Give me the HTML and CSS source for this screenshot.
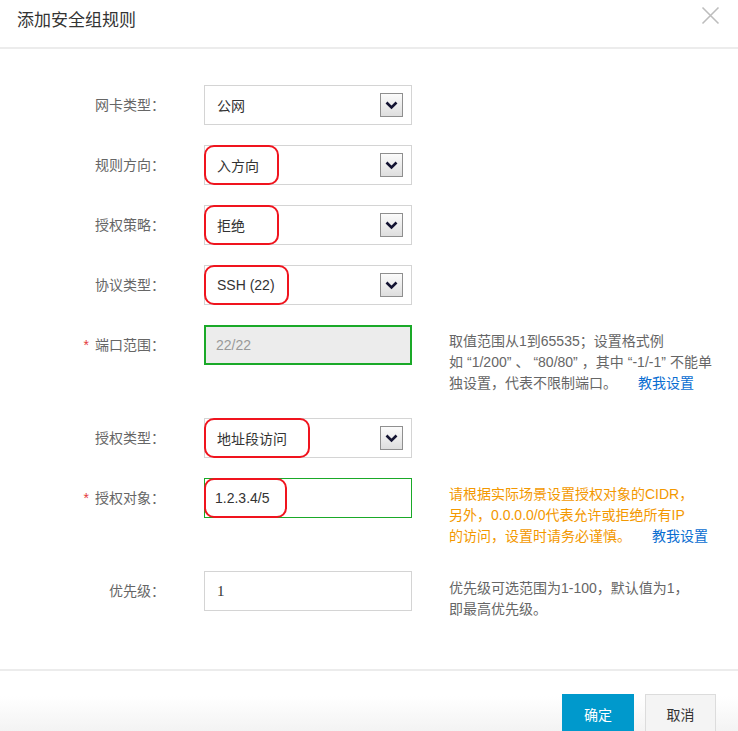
FILE: index.html
```html
<!DOCTYPE html>
<html lang="zh-CN">
<head>
<meta charset="utf-8">
<title>添加安全组规则</title>
<link rel="stylesheet" href="styles.css">
</head>
<body>
<div class="dialog">
  <div class="dlg-header">
    <h1 class="dlg-title">添加安全组规则</h1>
    <span class="dlg-close" aria-label="关闭">
      <svg width="19" height="19" viewBox="0 0 19 19"><path d="M1.5 1.5 L17.5 17.5 M17.5 1.5 L1.5 17.5" stroke="#bdbdbd" stroke-width="1.6" fill="none"/></svg>
    </span>
  </div>

  <div class="dlg-body">
    <div class="row">
      <div class="label">网卡类型<span class="colon">：</span></div>
      <div class="field select">
        <span class="value">公网</span>
        <span class="arrow"><svg width="21" height="22" viewBox="0 0 21 22"><path d="M5.5 8.5 L10.5 13.5 L15.5 8.5" stroke="#141432" stroke-width="2.6" fill="none"/></svg></span>
      </div>
    </div>

    <div class="row">
      <div class="label">规则方向<span class="colon">：</span></div>
      <div class="field select">
        <span class="value">入方向</span>
        <span class="arrow"><svg width="21" height="22" viewBox="0 0 21 22"><path d="M5.5 8.5 L10.5 13.5 L15.5 8.5" stroke="#141432" stroke-width="2.6" fill="none"/></svg></span>
        <span class="mark mark-74"></span>
      </div>
    </div>

    <div class="row">
      <div class="label">授权策略<span class="colon">：</span></div>
      <div class="field select">
        <span class="value">拒绝</span>
        <span class="arrow"><svg width="21" height="22" viewBox="0 0 21 22"><path d="M5.5 8.5 L10.5 13.5 L15.5 8.5" stroke="#141432" stroke-width="2.6" fill="none"/></svg></span>
        <span class="mark mark-74"></span>
      </div>
    </div>

    <div class="row">
      <div class="label">协议类型<span class="colon">：</span></div>
      <div class="field select">
        <span class="value">SSH (22)</span>
        <span class="arrow"><svg width="21" height="22" viewBox="0 0 21 22"><path d="M5.5 8.5 L10.5 13.5 L15.5 8.5" stroke="#141432" stroke-width="2.6" fill="none"/></svg></span>
        <span class="mark mark-84"></span>
      </div>
    </div>

    <div class="row row-help">
      <div class="label"><span class="req">*</span>端口范围<span class="colon">：</span></div>
      <div class="field input disabled valid">
        <span class="value">22/22</span>
      </div>
      <div class="help">取值范围从1到65535；设置格式例<br>如<span class="qo">“</span>1/200<span class="qc">”</span>、<span class="qo">“</span>80/80<span class="qc">”</span>，其中<span class="qo">“</span>-1/-1<span class="qc">”</span>不能单<br>独设置，代表不限制端口。 <a class="link" href="#">教我设置</a></div>
    </div>

    <div class="row">
      <div class="label">授权类型<span class="colon">：</span></div>
      <div class="field select">
        <span class="value">地址段访问</span>
        <span class="arrow"><svg width="21" height="22" viewBox="0 0 21 22"><path d="M5.5 8.5 L10.5 13.5 L15.5 8.5" stroke="#141432" stroke-width="2.6" fill="none"/></svg></span>
        <span class="mark mark-105"></span>
      </div>
    </div>

    <div class="row row-help">
      <div class="label"><span class="req">*</span>授权对象<span class="colon">：</span></div>
      <div class="field input valid">
        <span class="value value-tight">1.2.3.4/5</span>
        <span class="mark mark-82"></span>
      </div>
      <div class="help help-warn">请根据实际场景设置授权对象的CIDR，<br>另外，0.0.0.0/0代表允许或拒绝所有IP<br>的访问，设置时请务必谨慎。 <a class="link" href="#">教我设置</a></div>
    </div>

    <div class="row row-last">
      <div class="label">优先级<span class="colon">：</span></div>
      <div class="field input">
        <span class="value value-serif">1</span>
      </div>
      <div class="help help-short">优先级可选范围为1-100，默认值为1，<br>即最高优先级。</div>
    </div>
  </div>

  <div class="dlg-footer">
    <button class="btn btn-primary" type="button">确定</button>
    <button class="btn btn-default" type="button">取消</button>
  </div>
</div>
</body>
</html>
```

FILE: styles.css
```css
html, body {
  margin: 0;
  padding: 0;
  background: #fff;
  overflow: hidden;
}
body {
  font-family: "Liberation Sans", "Noto Sans CJK SC", sans-serif;
  font-size: 14px;
  color: #333;
}
.dialog {
  width: 738px;
  min-height: 731px;
  display: flex;
  flex-direction: column;
}
.dlg-header {
  height: 47px;
  border-bottom: 2px solid #ececec;
  display: flex;
  align-items: flex-start;
  justify-content: space-between;
  flex: none;
}
.dlg-title {
  margin: 0;
  padding: 7px 0 0 17px;
  font-family: "Noto Sans CJK SC", sans-serif;
  font-size: 17px;
  font-weight: normal;
  line-height: 24px;
  color: #333;
}
.dlg-close {
  margin: 6px 18px 0 0;
  display: flex;
}
.dlg-body {
  padding: 36px 0 0 0;
  display: flex;
  flex-direction: column;
  gap: 20px;
  height: 622px;
  box-sizing: border-box;
  border-bottom: 2px solid #ececec;
  flex: none;
}
.row {
  display: flex;
  align-items: flex-start;
}
.row-help {
  min-height: 73px;
}
.label {
  width: 165px;
  text-align: right;
  line-height: 40px;
  color: #666;
  flex: none;
}
.colon {
  display: inline-block;
  width: 14px;
  text-align: center;
  font-family: "Liberation Sans", sans-serif;
}
.colon::first-letter {
  color: inherit;
}
.req {
  color: #e4393c;
  margin-right: 6px;
}
.field {
  position: relative;
  margin-left: 39px;
  width: 208px;
  height: 40px;
  box-sizing: border-box;
  border: 1px solid #d4d4d4;
  display: flex;
  align-items: center;
  justify-content: space-between;
  flex: none;
  background: #fff;
}
.value {
  padding-left: 12px;
  color: #333;
}
.value-tight {
  padding-left: 10px;
}
.value-serif {
  font-family: "Liberation Serif", serif;
  font-size: 15px;
}
.input.disabled {
  background: #ececec;
}
.input.disabled .value {
  color: #999;
}
.input.valid {
  border-color: #1aa928;
}
.input.disabled.valid {
  border-width: 2px;
}
.input.disabled.valid .value {
  padding-left: 10px;
}
.arrow {
  width: 21px;
  height: 22px;
  margin-right: 8px;
  border: 1px solid #8f8f8f;
  background: linear-gradient(#fbfbfb, #dedede);
  display: flex;
}
.mark {
  position: absolute;
  left: -1px;
  top: -1px;
  height: 40px;
  box-sizing: border-box;
  border: 2px solid #f0141e;
  border-radius: 10px;
}
.mark-74 { width: 75px; }
.mark-84 { width: 85px; }
.mark-105 { width: 106px; }
.mark-82 { width: 83px; }
.help {
  margin-left: 37px;
  padding-top: 6px;
  line-height: 21px;
  color: #666;
  white-space: nowrap;
}
.qo {
  padding-left: 4px;
}
.qc {
  padding-right: 4px;
}
.help-short {
  padding-top: 7px;
}
.help-warn {
  color: #f39800;
}
.link {
  color: #0a6ed1;
  text-decoration: none;
  margin-left: 17px;
}
.dlg-footer {
  flex: 1;
  display: flex;
  justify-content: flex-end;
  gap: 11px;
  padding: 23px 22px 0 0;
  background: linear-gradient(#fff 0px, #fff 25px, #f3f3f3 61px);
}
.btn {
  width: 72px;
  height: 40px;
  font-family: "Noto Sans CJK SC", sans-serif;
  font-size: 14px;
  border: 1px solid transparent;
  padding: 0;
}
.btn-primary {
  background: #0099cc;
  border-color: #0099cc;
  color: #fff;
}
.btn-default {
  background: #f4f4f4;
  border-color: #dcdcdc;
  color: #333;
  width: 71px;
}
```
